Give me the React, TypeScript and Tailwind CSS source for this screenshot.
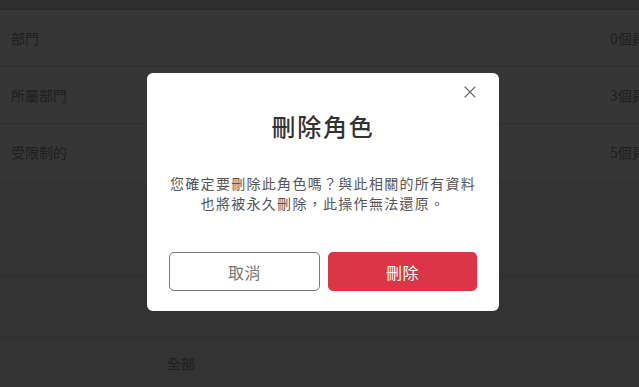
import React from 'react'
import { X } from 'lucide-react'

const font = { fontFamily: '"Noto Sans CJK TC", "Noto Sans", sans-serif' }

const rows = [
    { label: '部門', count: '0個員工' },
    { label: '所屬部門', count: '3個員工' },
    { label: '受限制的', count: '5個員工' },
]

const DeleteRoleModal = () => {
    return (
        <div className="absolute left-[147px] top-[73px] w-[352px] rounded-md bg-white px-[22px] pt-[37px] pb-[20px] flex flex-col items-center">
            <button className="absolute right-[19px] top-[9px] text-[#6b6b6b]">
                <X className="h-5 w-5" strokeWidth={1.4} />
            </button>
            <h2 className="text-[24px] leading-8 font-medium text-[#333333] tracking-[1.8px]">刪除角色</h2>
            <p className="mt-[31px] text-center text-[14px] leading-5 text-[#555555] tracking-[1.3px]">
                您確定要刪除此角色嗎？與此相關的所有資料<br />也將被永久刪除，此操作無法還原。
            </p>
            <div className="mt-[39px] flex w-full gap-2">
                <button className="h-[39px] flex-1 rounded-[5px] border border-[#777777] text-[16px] text-[#777777] tracking-[0.5px]">取消</button>
                <button className="h-[39px] flex-1 rounded-[5px] bg-[#dc3545] text-[16px] text-white tracking-[0.5px]">刪除</button>
            </div>
        </div>
    )
}

export default function App() {
    return (
        <div className="relative h-[387px] w-[639px] overflow-hidden bg-[#333333]" style={font}>
            <div className="h-[10px] bg-[#2e2e2e] border-b border-[#282828]" />
            <div className="bg-[#363636]">
                {rows.map((r) => (
                    <div key={r.label} className="flex h-[57px] items-center justify-between border-b border-[#2e2e2e] pl-[11px] text-[14px] text-[#1e1e1e] last:border-b-0">
                        <span>{r.label}</span>
                        <span className="w-[29px] overflow-hidden whitespace-nowrap">{r.count}</span>
                    </div>
                ))}
            </div>
            <div className="h-[95px] border-b border-[#2e2e2e]" />
            <div className="h-[62px] border-b border-[#2e2e2e]" />
            <div className="flex h-[50px] items-center pl-[167px] text-[14px] text-[#1e1e1e]">全部</div>
            <DeleteRoleModal />
        </div>
    )
}
